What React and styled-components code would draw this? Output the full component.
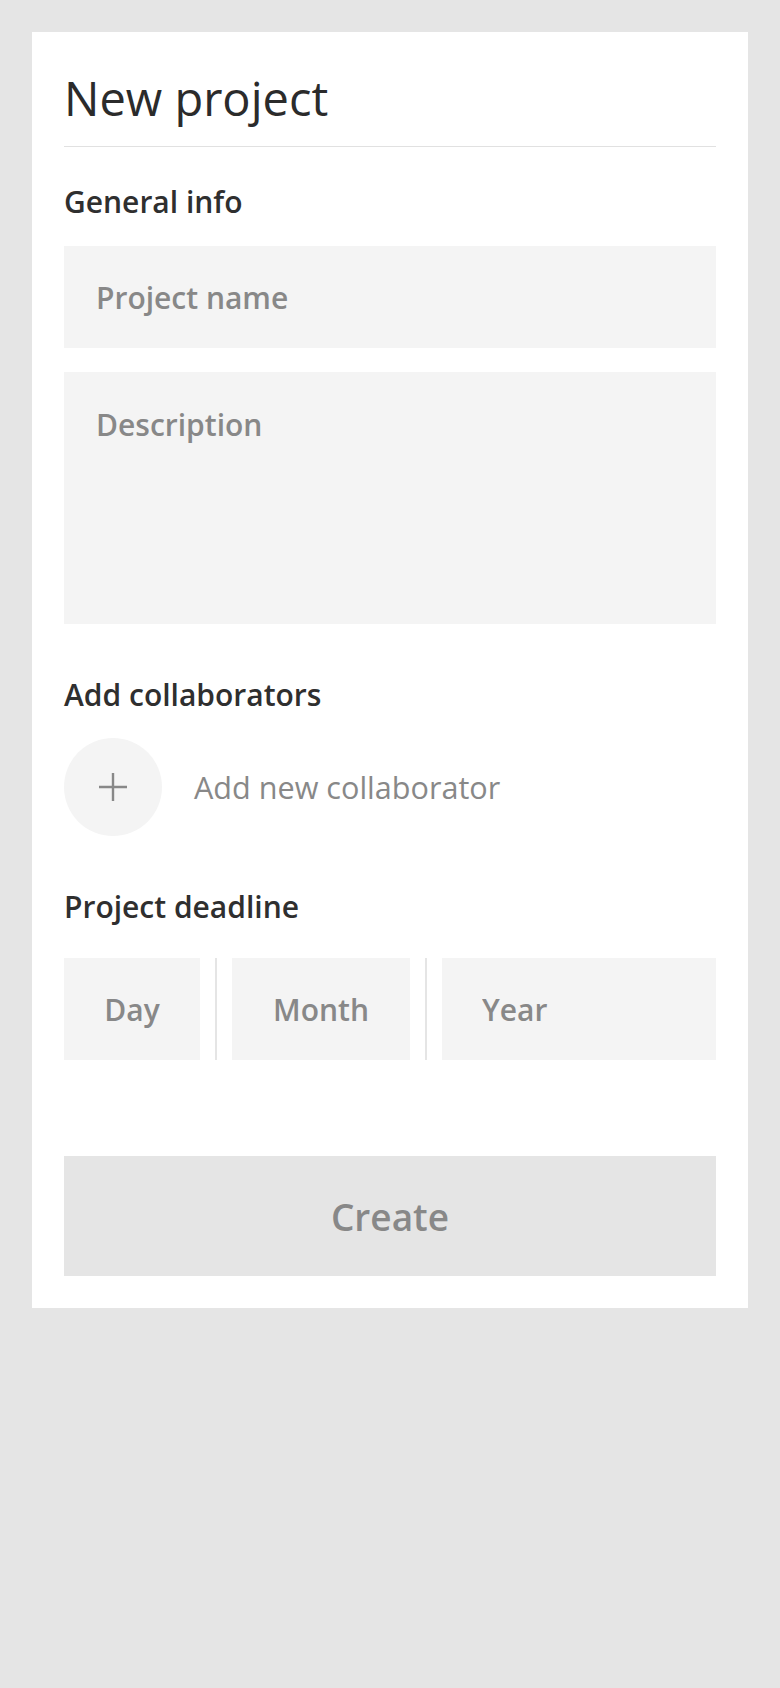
import React from "react"
import styled, { createGlobalStyle } from "styled-components"

const GlobalStyle = createGlobalStyle`
  * {
    box-sizing: border-box;
  }
  html, body {
    margin: 0;
    padding: 0;
    background-color: #e5e5e5;
    font-family: "Open Sans", "Noto Sans", sans-serif;
  }
`

const Page = styled.div`
  min-height: 100vh;
  padding: 32px;
  background-color: #e5e5e5;
`

const Card = styled.form`
  background-color: #ffffff;
  padding: 32px;
  display: flex;
  flex-direction: column;
`

const Title = styled.h1`
  margin: 10px 0 0 0;
  padding-bottom: 24px;
  border-bottom: solid 1px #e1e1e1;
  font-size: 47px;
  line-height: 48px;
  font-weight: 400;
  color: #2b2b2b;
`

const Label = styled.h2`
  margin: ${(props) => props.top}px 0 0 0;
  font-size: 30px;
  line-height: 30px;
  font-weight: 600;
  color: #2f2f2f;
`

const TextField = styled.input`
  display: block;
  width: 100%;
  height: 102px;
  margin-top: ${(props) => props.top}px;
  padding: 0 32px;
  border: none;
  outline: none;
  background-color: #f4f4f4;
  font-family: inherit;
  font-size: 30px;
  font-weight: 600;
  color: #2b2b2b;

  &::placeholder {
    color: #888888;
  }
`

const TextArea = styled.textarea`
  display: block;
  width: 100%;
  height: 252px;
  margin-top: 24px;
  padding: 32px 32px;
  border: none;
  outline: none;
  resize: none;
  background-color: #f4f4f4;
  font-family: inherit;
  font-size: 30px;
  font-weight: 600;
  color: #2b2b2b;

  &::placeholder {
    color: #888888;
  }
`

const CollaboratorRow = styled.div`
  display: flex;
  align-items: center;
  gap: 32px;
  margin-top: 28px;
`

const AddButton = styled.button`
  width: 98px;
  height: 98px;
  border-radius: 50%;
  border: none;
  padding: 0;
  background-color: #f4f4f4;
  display: flex;
  align-items: center;
  justify-content: center;
  cursor: pointer;
`

const AddText = styled.span`
  font-size: 30.6px;
  font-weight: 400;
  color: #888888;
`

const DateRow = styled.div`
  display: flex;
  align-items: stretch;
  gap: 15px;
  height: 102px;
  margin-top: 36px;
`

const DateField = styled.input`
  width: ${(props) => (props.grow ? "auto" : props.w + "px")};
  flex: ${(props) => (props.grow ? 1 : "none")};
  min-width: 0;
  padding: 0;
  padding-left: ${(props) => (props.grow ? "40px" : "0")};
  border: none;
  outline: none;
  background-color: #f4f4f4;
  text-align: ${(props) => (props.grow ? "left" : "center")};
  font-family: inherit;
  font-size: 30px;
  font-weight: 600;
  color: #2b2b2b;

  &::placeholder {
    color: #888888;
  }
`

const Separator = styled.div`
  width: 2px;
  background-color: #e5e5e5;
`

const CreateButton = styled.button`
  margin-top: 96px;
  height: 120px;
  width: 100%;
  border: none;
  background-color: #e5e5e5;
  font-family: inherit;
  font-size: 37px;
  font-weight: 600;
  color: #888888;
`

const PlusIcon = () => (
  <svg width="28" height="28" viewBox="0 0 28 28">
    <path d="M14 0 V28 M0 14 H28" stroke="#888888" strokeWidth="2.4" fill="none" />
  </svg>
)

const App = () => {
  return (
    <Page>
      <GlobalStyle />
      <Card onSubmit={(e) => e.preventDefault()}>
        <Title>New project</Title>

        <Label top={40}>General info</Label>
        <TextField top={29} placeholder="Project name" />
        <TextArea placeholder="Description" />

        <Label top={56}>Add collaborators</Label>
        <CollaboratorRow>
          <AddButton type="button" aria-label="Add new collaborator">
            <PlusIcon />
          </AddButton>
          <AddText>Add new collaborator</AddText>
        </CollaboratorRow>

        <Label top={56}>Project deadline</Label>
        <DateRow>
          <DateField w={136} placeholder="Day" />
          <Separator />
          <DateField w={178} placeholder="Month" />
          <Separator />
          <DateField grow placeholder="Year" />
        </DateRow>

        <CreateButton type="submit">Create</CreateButton>
      </Card>
    </Page>
  )
}

export default App
